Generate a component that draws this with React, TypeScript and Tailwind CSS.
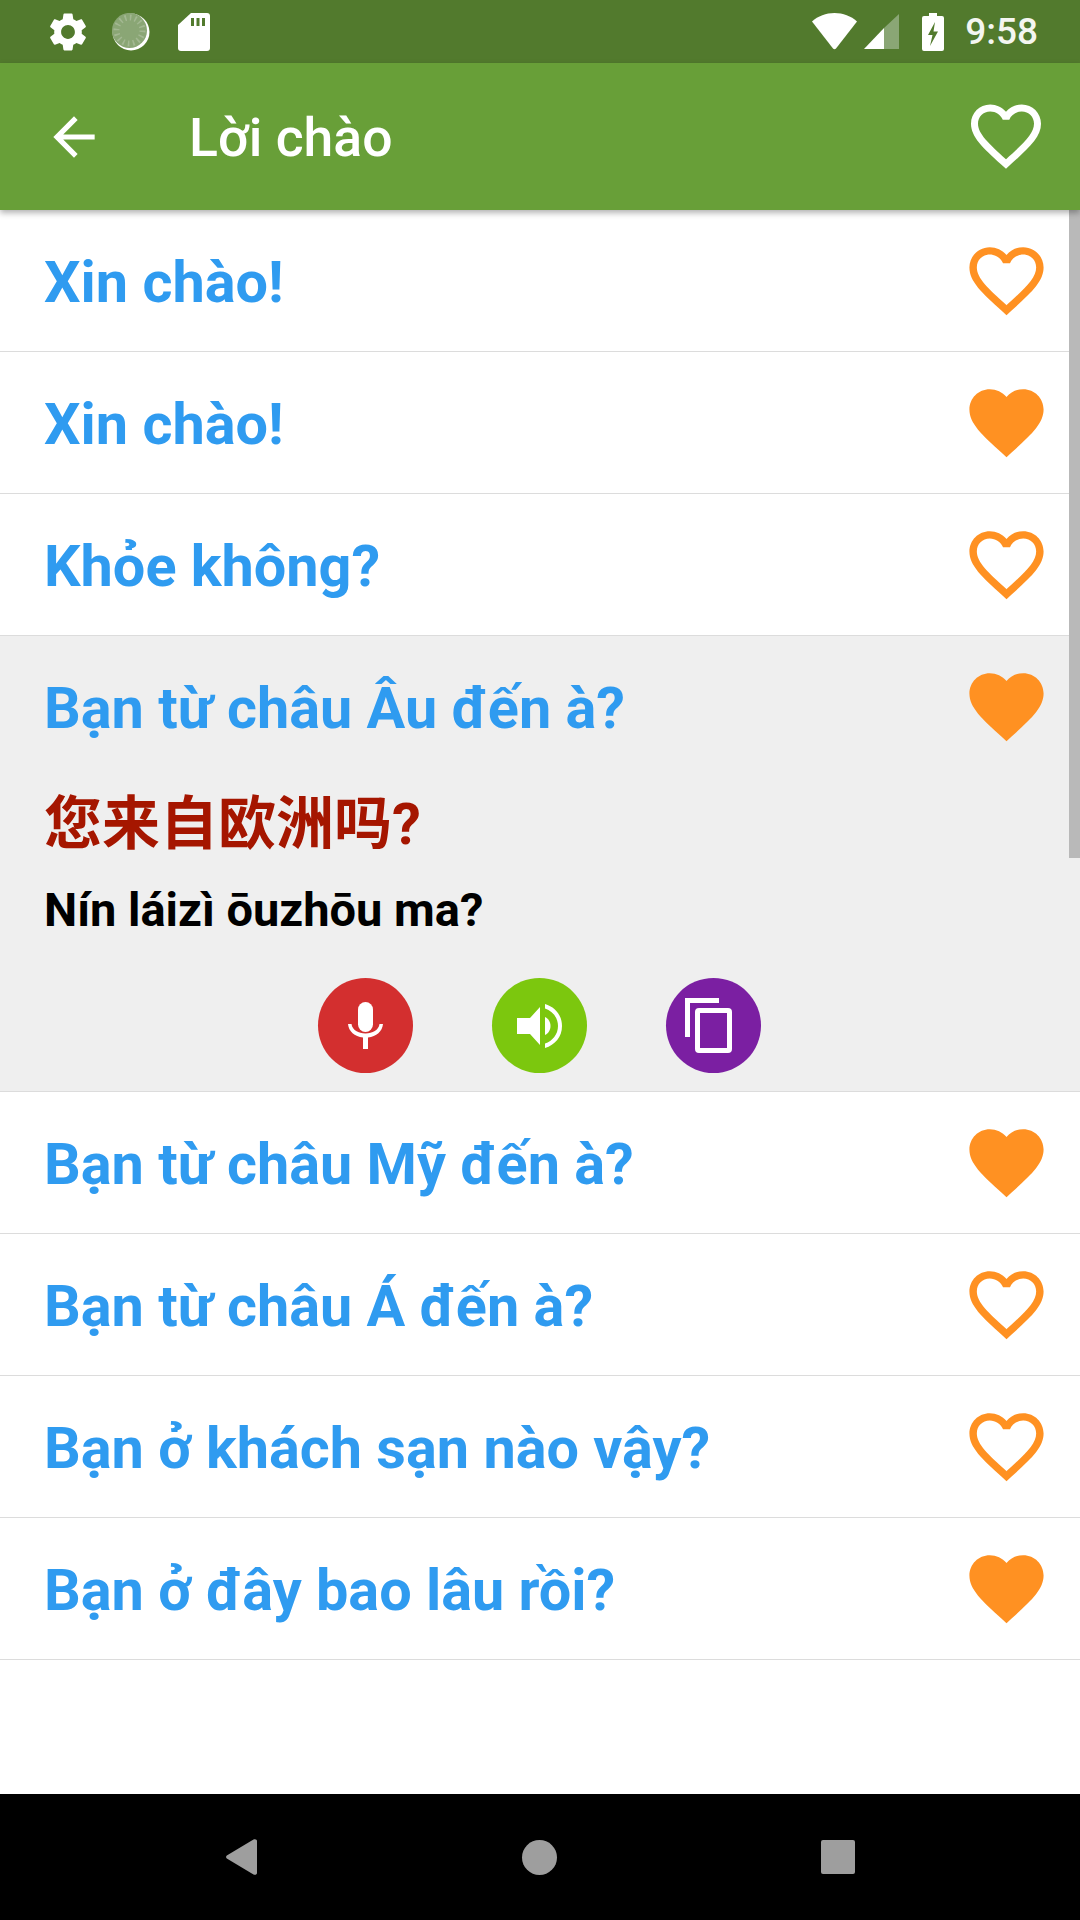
import React from "react";

const HEART_OUT = "M16.5 3c-1.74 0-3.41.81-4.5 2.09C10.91 3.81 9.24 3 7.5 3 4.42 3 2 5.42 2 8.5c0 3.78 3.4 6.86 8.55 11.54L12 21.35l1.45-1.32C18.6 15.36 22 12.28 22 8.5 22 5.42 19.58 3 16.5 3zm-4.4 15.55l-.1.1-.1-.1C7.14 14.24 4 11.39 4 8.5 4 6.5 5.5 5 7.5 5c1.54 0 3.04.99 3.57 2.36h1.87C13.46 5.99 14.96 5 16.5 5c2 0 3.5 1.5 3.5 3.5 0 2.89-3.14 5.74-7.9 10.05z";
const HEART_FILL = "M12 21.35l-1.45-1.32C5.4 15.36 2 12.28 2 8.5 2 5.42 4.42 3 7.5 3c1.74 0 3.41.81 4.5 2.09C13.09 3.81 14.76 3 16.5 3 19.58 3 22 5.42 22 8.5c0 3.78-3.4 6.86-8.55 11.54L12 21.35z";

function Heart({ filled }: { filled: boolean }) {
  return (
    <svg viewBox="0 0 24 24" className="w-[89px] h-[89px] shrink-0 fill-[#ff9122]">
      <path d={filled ? HEART_FILL : HEART_OUT} />
    </svg>
  );
}

function RowText({ text }: { text: string }) {
  return <span className="text-[57.6px] leading-[66px] mt-[4px] font-bold text-[#2f9bf0]">{text}</span>;
}

function Row({ text, filled }: { text: string; filled: boolean }) {
  return (
    <div className="h-[142px] border-b border-[#dcdcdc] bg-white flex items-center justify-between pl-[44px] pr-[29px]">
      <RowText text={text} />
      <Heart filled={filled} />
    </div>
  );
}

function StatusBar() {
  return (
    <div className="h-[63px] bg-[#527a2d] flex items-center pl-[45px] pr-[42px] text-white">
      <svg viewBox="0 0 24 24" className="w-[46px] h-[46px] fill-white">
        <path d="M19.14 12.94c.04-.3.06-.61.06-.94 0-.32-.02-.64-.07-.94l2.03-1.58c.18-.14.23-.41.12-.61l-1.92-3.32c-.12-.22-.37-.29-.59-.22l-2.39.96c-.5-.38-1.03-.7-1.62-.94l-.36-2.54c-.04-.24-.24-.41-.48-.41h-3.84c-.24 0-.43.17-.47.41l-.36 2.54c-.59.24-1.13.57-1.62.94l-2.39-.96c-.22-.08-.47 0-.59.22L2.74 8.87c-.12.21-.08.47.12.61l2.03 1.58c-.05.3-.09.63-.09.94s.02.64.07.94l-2.03 1.58c-.18.14-.23.41-.12.61l1.92 3.32c.12.22.37.29.59.22l2.39-.96c.5.38 1.03.7 1.62.94l.36 2.54c.05.24.24.41.48.41h3.84c.24 0 .44-.17.47-.41l.36-2.54c.59-.24 1.13-.56 1.62-.94l2.39.96c.22.08.47 0 .59-.22l1.92-3.32c.12-.22.07-.47-.12-.61l-2.01-1.58zM12 15.6c-1.98 0-3.6-1.62-3.6-3.6s1.62-3.6 3.6-3.6 3.6 1.62 3.6 3.6-1.62 3.6-3.6 3.6z" />
      </svg>
      <svg viewBox="0 0 38 38" className="w-[38px] h-[38px] ml-[21px]">
        <circle cx="19" cy="19" r="18.5" fill="#ffffff" />
        <circle cx="17.5" cy="17.5" r="17.5" fill="#8aa675" />
        <circle cx="17.5" cy="17.5" r="13" fill="none" stroke="#a3b892" strokeWidth="6" strokeDasharray="1.6 3.5" />
      </svg>
      <svg viewBox="0 0 32 38" className="w-[32px] h-[38px] ml-[28px] fill-white">
        <path d="M13 0h16a3 3 0 0 1 3 3v32a3 3 0 0 1-3 3H3a3 3 0 0 1-3-3V12z" />
        <path d="M13 5h3v8h-3zM18.5 5h3v8h-3zM24 5h3v8h-3z" fill="#527a2d" />
      </svg>
      <div className="flex-1" />
      <svg viewBox="0 0 45 37" className="w-[45px] h-[37px] fill-white">
        <path d="M22.5 0C14 0 6 3 0 8.5L21 35.5c.8 1 2.2 1 3 0L45 8.5C39 3 31 0 22.5 0z" />
      </svg>
      <svg viewBox="0 0 35 35" className="w-[35px] h-[35px] ml-[7px]">
        <path d="M0 35 20 14v21z" fill="#ffffff" />
        <path d="M20 14 35 0v35H20z" fill="#8aa675" />
      </svg>
      <svg viewBox="0 0 22 38" className="w-[22px] h-[38px] ml-[23px] fill-white">
        <path fillRule="evenodd" d="M7 0h8v3h5a2 2 0 0 1 2 2v31a2 2 0 0 1-2 2H2a2 2 0 0 1-2-2V5a2 2 0 0 1 2-2h5zM13 9l-7 13h4.500L8 33l8-14.500h-4.500z" />
      </svg>
      <span className="ml-[21px] text-[37px] font-medium leading-none text-[#f4f6f1]">9:58</span>
    </div>
  );
}

function Toolbar() {
  return (
    <div className="relative z-10 h-[147px] bg-[#689f38] flex items-center pl-[43px] pr-[32px] shadow-[0_3px_6px_rgba(0,0,0,0.3)]">
      <svg viewBox="0 0 24 24" className="w-[62px] h-[62px] fill-white">
        <path d="M20 11H7.830l5.590-5.590L12 4l-8 8 8 8 1.410-1.410L7.830 13H20v-2z" />
      </svg>
      <span className="ml-[84px] flex-1 text-[53.5px] leading-[62px] mt-[2px] font-medium text-white">Lời chào</span>
      <svg viewBox="0 0 24 24" className="w-[84px] h-[84px] fill-white mb-[2px]">
        <path d={HEART_OUT} />
      </svg>
    </div>
  );
}

function RoundBtn({ bg, children }: { bg: string; children: React.ReactNode }) {
  return <div className={`w-[95px] h-[95px] rounded-full flex items-center justify-center ${bg}`}>{children}</div>;
}

function Expanded() {
  return (
    <div className="h-[456px] bg-[#efefef] border-b border-[#dcdcdc] flex flex-col">
      <div className="h-[141px] shrink-0 flex items-center justify-between pl-[44px] pr-[29px]">
        <RowText text="Bạn từ châu Âu đến à?" />
        <Heart filled />
      </div>
      <div className="pl-[44px] mt-[12px] text-[58px] leading-[70px] font-bold text-[#a51600]">您来自欧洲吗?</div>
      <div className="pl-[44px] mt-[25px] text-[47px] leading-[52px] font-bold text-black">Nín láizì ōuzhōu ma?</div>
      <div className="flex justify-center gap-[79px] mt-[42px] pr-[1px]">
        <RoundBtn bg="bg-[#d32f2f]">
          <svg viewBox="0 0 35 47" className="w-[35px] h-[47px] fill-white">
            <rect x="10" y="0" width="15" height="30" rx="7.5" />
            <path d="M0 22h3.500c.8 6 7 9.500 14 9.500S30.700 28 31.500 22H35c-.8 7.500-6.500 12.500-15 13.500V47h-5V35.500C6.500 34.500.8 29.500 0 22z" />
          </svg>
        </RoundBtn>
        <RoundBtn bg="bg-[#7cc70e]">
          <svg viewBox="0 0 45 44" className="w-[45px] h-[44px] fill-white">
            <path d="M0 14h13L23 3v38L13 30H0z" />
            <path d="M28 13c4 2 5.500 5.500 5.500 9S32 29 28 31z" />
            <path d="M28 0c10 3 17 11 17 22S38 41 28 44v-4.500c7.500-2.500 13-9 13-17.500S35.500 7 28 4.500z" />
          </svg>
        </RoundBtn>
        <RoundBtn bg="bg-[#7b1fa2]">
          <svg viewBox="0 0 47 55" className="w-[47px] h-[55px] fill-white mr-[11px]">
            <path d="M0 0h34v5H5v34H0z" />
            <path fillRule="evenodd" d="M14 10h29a4 4 0 0 1 4 4v37a4 4 0 0 1-4 4H14a4 4 0 0 1-4-4V14a4 4 0 0 1 4-4zm1 5v35h27V15z" />
          </svg>
        </RoundBtn>
      </div>
    </div>
  );
}

function NavBar() {
  return (
    <div className="h-[126px] bg-black flex items-center justify-between pl-[226px] pr-[225px]">
      <svg viewBox="0 0 31 36" className="w-[31px] h-[36px] fill-[#9e9e9e]">
        <path d="M0.800 16.500 27.500.600c1.500-1 3.500-.3 3.500 1.400v32c0 1.700-2 2.400-3.500 1.400L.800 19.500c-1-.7-1-2.300 0-3z" />
      </svg>
      <div className="w-[35px] h-[35px] rounded-full bg-[#9e9e9e]" />
      <div className="w-[34px] h-[34px] rounded-[2px] bg-[#9e9e9e]" />
    </div>
  );
}

export default function App() {
  return (
    <div className="w-[1080px] h-[1920px] flex flex-col bg-white overflow-hidden font-['Roboto','Noto_Sans_CJK_SC',sans-serif]">
      <StatusBar />
      <Toolbar />
      <div className="relative flex-1">
        <Row text="Xin chào!" filled={false} />
        <Row text="Xin chào!" filled />
        <Row text="Khỏe không?" filled={false} />
        <Expanded />
        <Row text="Bạn từ châu Mỹ đến à?" filled />
        <Row text="Bạn từ châu Á đến à?" filled={false} />
        <Row text="Bạn ở khách sạn nào vậy?" filled={false} />
        <Row text="Bạn ở đây bao lâu rồi?" filled />
        <div className="absolute top-0 right-0 w-[11px] h-[648px] bg-[#b9b9b9]" />
      </div>
      <NavBar />
    </div>
  );
}
